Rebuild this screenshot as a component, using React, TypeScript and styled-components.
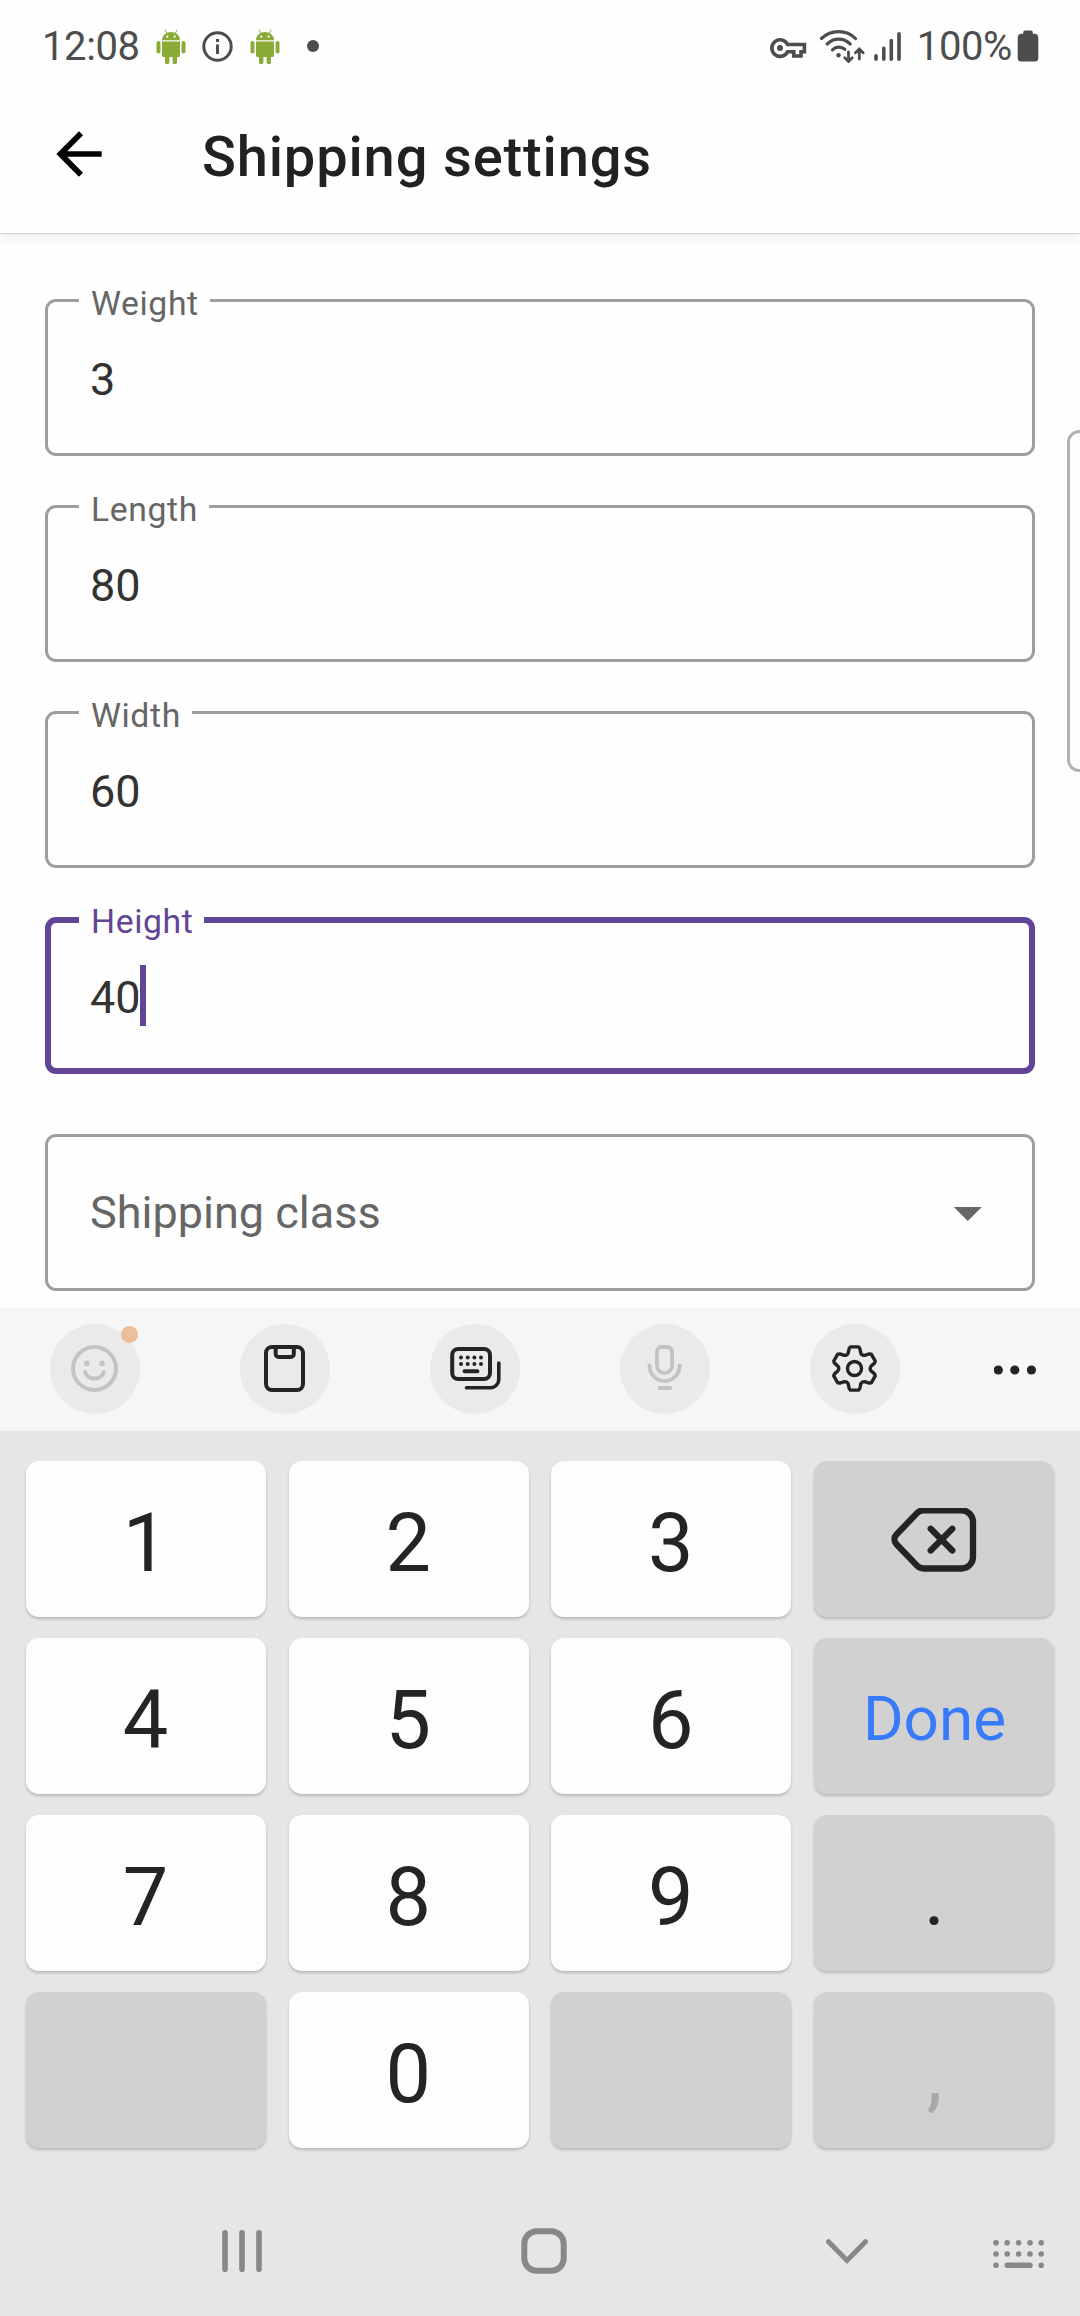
import React from "react";
import styled, { createGlobalStyle } from "styled-components";

const GlobalStyle = createGlobalStyle`
  *, *::before, *::after { box-sizing: border-box; }
  html, body { margin: 0; padding: 0; background: #fefefe; }
  body { font-family: Roboto, "Noto Sans", sans-serif; }
  svg { display: block; flex: none; }
`;

const ink = "#242424";
const statusInk = "#4d4d4d";
const accent = "#624594";

const Screen = styled.div`
  position: relative;
  display: flex;
  flex-direction: column;
  width: 1080px;
  height: 2316px;
  overflow: hidden;
  background: #fefefe;
`;

const StatusBar = styled.div`
  display: flex;
  justify-content: space-between;
  height: 92px;
  padding: 0 41px 0 42px;
  color: ${statusInk};
`;

const StatusGroup = styled.div`
  display: flex;
  align-items: center;
`;

const StatusText = styled.span<{ $gap: number }>`
  font-size: 40px;
  line-height: 92px;
  letter-spacing: -0.4px;
  padding-top: 1px;
  margin-right: ${(p) => p.$gap}px;
`;

const Header = styled.header`
  position: relative;
  z-index: 1;
  display: flex;
  align-items: center;
  height: 141px;
  padding: 0 45px;
  background: #fefefe;
  box-shadow: 0 1px 1px rgba(0, 0, 0, 0.12), 0 4px 14px rgba(0, 0, 0, 0.07);
  clip-path: inset(0 0 -30px 0);
`;

const BackButton = styled.button`
  display: flex;
  width: 68px;
  height: 68px;
  margin: 0 89px 17px 0;
  padding: 0;
  border: 0;
  background: none;
`;

const Title = styled.h1`
  margin: 0 0 11px;
  font-size: 56px;
  line-height: 66px;
  font-weight: 500;
  letter-spacing: 0.85px;
  color: #212121;
`;

const Form = styled.main`
  display: flex;
  flex-direction: column;
  height: 1075px;
  padding: 66px 45px 0;
  gap: 49px;
`;

const Field = styled.fieldset<{ $focused?: boolean }>`
  display: block;
  height: 157px;
  margin: 0;
  min-width: 0;
  padding: 0 ${(p) => (p.$focused ? 28 : 31)}px;
  border: ${(p) => (p.$focused ? 6 : 3)}px solid ${(p) => (p.$focused ? accent : "#9e9e9e")};
  border-radius: 11px;
  color: ${(p) => (p.$focused ? accent : "#666666")};
`;

const Legend = styled.legend<{ $focused?: boolean }>`
  height: ${(p) => (p.$focused ? 6 : 3)}px;
  padding: 0 11px 0 12px;
  font-size: 33.75px;
  line-height: 9px;
  letter-spacing: 0.6px;
`;

const ValueRow = styled.div<{ $focused?: boolean }>`
  display: flex;
  align-items: center;
  height: ${(p) => (p.$focused ? 145 : 151)}px;
  padding: 4px 11px 0;
`;

const Value = styled.span`
  font-size: 45px;
  line-height: 60px;
  color: #323232;
`;

const Caret = styled.span`
  width: 6px;
  height: 61px;
  margin: 0 0 4px -1px;
  background: ${accent};
`;

const Select = styled.div`
  display: flex;
  align-items: center;
  justify-content: space-between;
  height: 157px;
  margin-top: 11px;
  padding: 0 50px 0 42px;
  border: 3px solid #9e9e9e;
  border-radius: 11px;
  font-size: 45px;
  color: #666666;
`;

const EdgeHandle = styled.div`
  position: absolute;
  top: 430px;
  right: -12px;
  width: 25px;
  height: 342px;
  border: 3px solid #b2b2b2;
  border-radius: 12px;
  background: #fefefe;
`;

const Toolbar = styled.div`
  display: flex;
  align-items: center;
  height: 123px;
  padding: 0 44px 2px 50px;
  gap: 100px;
  background: #f6f6f6;
`;

const Tool = styled.button`
  position: relative;
  display: flex;
  align-items: center;
  justify-content: center;
  width: 90px;
  height: 90px;
  padding: 0;
  border: 0;
  border-radius: 50%;
  background: #eaeaea;
`;

const Badge = styled.span`
  position: absolute;
  top: 2px;
  right: 2px;
  width: 17px;
  height: 17px;
  border-radius: 50%;
  background: rgba(236, 179, 137, 0.85);
`;

const MoreButton = styled.button`
  display: flex;
  margin: 2px 0 0 -6px;
  padding: 0;
  border: 0;
  background: none;
`;

const Keypad = styled.div`
  display: grid;
  grid-template-columns: repeat(4, 240px);
  grid-auto-rows: 156px;
  justify-content: space-between;
  row-gap: 21px;
  height: 749px;
  padding: 30px 26px 0;
  background: #e6e6e6;
`;

type KeyTone = "number" | "action";

const Key = styled.button<{ $tone: KeyTone; $color?: string; $size?: number }>`
  display: flex;
  align-items: center;
  justify-content: center;
  padding: ${(p) => (p.$size ? "6px 0 0 1px" : p.$tone === "number" ? "8px 1px 0 0" : "8px 0 0 1px")};
  border: 0;
  border-radius: 13px;
  background: ${(p) => (p.$tone === "number" ? "#fdfdfd" : "#d1d1d1")};
  box-shadow: 0 2px 3px rgba(0, 0, 0, 0.2);
  font-family: inherit;
  font-size: ${(p) => p.$size ?? 81}px;
  line-height: 1;
  color: ${(p) => p.$color ?? ink};
`;

const NavBar = styled.nav`
  display: flex;
  align-items: center;
  flex: 1;
  padding: 6px 36px 0 222px;
  background: #e6e6e6;
`;

const NavButton = styled.button<{ $after: number; $drop?: number }>`
  display: flex;
  margin: 0 ${(p) => p.$after}px 0 0;
  padding: ${(p) => p.$drop ?? 0}px 0 0;
  border: 0;
  background: none;
`;

const IconSlot = styled.span<{ $before?: number; $shift?: number }>`
  display: flex;
  margin-left: ${(p) => p.$before ?? 0}px;
  padding-top: ${(p) => p.$shift ?? 0}px;
`;

const AndroidIcon = () => (
  <svg width="30" height="35" viewBox="0 0 30 35" fill="#8aab38">
    <path d="M6 11.2C6 6.8 9.6 3 15 3s9 3.800 9 8.200Z" />
    <path d="M10.800 4.200 8.900 1M19.200 4.200 21.100 1" stroke="#8aab38" strokeWidth="1" strokeLinecap="round" />
    <path d="M6 12.500h18v14a1.600 1.600 0 0 1-1.600 1.600H21v5a2.200 2.200 0 0 1-4.400 0v-5h-3.200v5a2.200 2.200 0 0 1-4.400 0v-5H7.600A1.600 1.600 0 0 1 6 26.500Z" />
    <rect x="0.500" y="12" width="4" height="12.500" rx="2" />
    <rect x="25.500" y="12" width="4" height="12.500" rx="2" />
    <circle cx="11.300" cy="7.700" r="1.100" fill="#fefefe" />
    <circle cx="18.700" cy="7.700" r="1.100" fill="#fefefe" />
  </svg>
);

const InfoIcon = () => (
  <svg width="31" height="31" viewBox="0 0 31 31" fill="none" stroke={statusInk} strokeWidth="3">
    <circle cx="15.500" cy="15.500" r="13.700" />
    <path d="M15.500 13.600v9.400M15.500 8v3" />
  </svg>
);

const VpnKeyIcon = () => (
  <svg width="37" height="22" viewBox="0 0 37 22" fill="none" stroke={statusInk} strokeWidth="3.600">
    <path d="M17.600 7.500A8.300 8.300 0 1 0 17.600 14.700H23.800V19H31V14.700H34.400V7.500Z" />
    <circle cx="10" cy="11" r="3" fill={statusInk} stroke="none" />
  </svg>
);

const WifiIcon = () => (
  <svg width="46" height="34" viewBox="819 29 46 34" fill="none" stroke={statusInk} strokeWidth="3.200" strokeLinecap="round">
    <path d="M821.500 38.500C831 29.300 846.500 29.300 855.500 38.500M827.200 44C834 37.500 843.500 37.500 850.200 44M832.500 49.800C836 46.300 841.500 46.300 844.800 49.300" />
    <circle cx="838.500" cy="55.300" r="2.200" fill={statusInk} stroke="none" />
    <path strokeWidth="2.800" d="M848.500 52v9M844.800 57.800l3.700 3.700 3.700-3.700M859.300 59v-9.500M855.500 52.700l3.800-3.700 3.800 3.700" />
  </svg>
);

const SignalIcon = () => (
  <svg width="28" height="31" viewBox="874 31 28 31" stroke={statusInk} strokeWidth="3.600" strokeLinecap="round">
    <path d="M876 55.800v3.400M883.800 48.300v10.900M891.300 40.500v18.700M899 33.800v25.400" />
  </svg>
);

const BatteryIcon = () => (
  <svg width="22" height="32" viewBox="0 0 22 32" fill={statusInk}>
    <path d="M6.300 3.300V2A1.600 1.600 0 0 1 7.900.4h6.200A1.600 1.600 0 0 1 15.700 2v1.800h1.800A3.800 3.800 0 0 1 21.300 7.600v20.400a3.600 3.600 0 0 1-3.600 3.600H4.300A3.600 3.600 0 0 1 .7 28V7.600A3.800 3.800 0 0 1 4.500 3.800h1.800Z" />
  </svg>
);

const DotIcon = () => (
  <svg width="12" height="12" viewBox="0 0 12 12">
    <circle cx="6" cy="6" r="6" fill={statusInk} />
  </svg>
);

const BackIcon = () => (
  <svg width="68" height="68" viewBox="0 0 24 24" fill="#000">
    <path d="M20 11H7.830l5.590-5.590L12 4l-8 8 8 8 1.410-1.410L7.830 13H20v-2z" />
  </svg>
);

const DropIcon = () => (
  <svg width="29" height="16" viewBox="0 0 29 16" fill="#666">
    <path d="M0.800 2h28L14.800 16Z" />
  </svg>
);

const SmileIcon = () => (
  <svg width="90" height="90" viewBox="50 1324 90 90" fill="none" stroke="#c3c3c3" strokeWidth="4" strokeLinecap="round">
    <circle cx="94.500" cy="1368.500" r="21.500" />
    <path d="M85.300 1372.300C87.500 1380.600 101.500 1380.600 103.700 1372.300" />
    <g fill="#c3c3c3" stroke="none">
      <circle cx="86.900" cy="1363.400" r="2.800" />
      <circle cx="102" cy="1363.400" r="2.800" />
    </g>
  </svg>
);

const ClipboardIcon = () => (
  <svg width="90" height="90" viewBox="240 1324 90 90" fill="none" stroke={ink} strokeWidth="4">
    <rect x="266" y="1347" width="37" height="43" rx="6" />
    <path d="M275.700 1347.500v6.500a3 3 0 0 0 3 3h12.100a3 3 0 0 0 3-3v-6.500" />
  </svg>
);

const keyDotColumns = [461, 467.700, 474.400, 481];

const KeyboardsIcon = () => (
  <svg width="90" height="90" viewBox="430 1324 90 90" fill="none" stroke={ink} strokeWidth="4" strokeLinecap="round">
    <rect x="452.200" y="1349" width="37.800" height="30" rx="6" />
    <path d="M464.600 1371.300h12.800" />
    <path strokeWidth="3.600" d="M498.800 1363v16.500a8.200 8.200 0 0 1-8.200 8.200H466.500" />
    <g fill={ink} stroke="none">
      {keyDotColumns.map((x) => (
        <React.Fragment key={x}>
          <circle cx={x} cy="1357.500" r="2" />
          <circle cx={x} cy="1364" r="2" />
        </React.Fragment>
      ))}
    </g>
  </svg>
);

const MicIcon = () => (
  <svg width="90" height="90" viewBox="620 1324 90 90" fill="none" stroke="#c3c3c3" strokeWidth="3.800" strokeLinecap="round">
    <path d="M656.900 1352a5 5 0 0 1 5-5h5.200a5 5 0 0 1 5 5v13.500a7.600 7.600 0 0 1-15.200 0Z" />
    <path d="M649.500 1365.500a15.100 15.600 0 0 0 30.200 0M659.700 1388h10.500" />
  </svg>
);

// One sixth of the gear outline, rotated around the hub to build the full shape.
const gearOutline = (() => {
  const tooth: [number, number][] = [[-19, -46], [-16, -60], [-12, -65], [12, -65], [16, -60], [19, -46], [22.5, -39], [30.4, -39.4]];
  const parts: string[] = [];
  for (let i = 0; i < 6; i++) {
    const a = (i * Math.PI) / 3;
    const p = tooth.map(([x, y]) => {
      const rx = (x * Math.cos(a) - y * Math.sin(a)) / 3;
      const ry = (x * Math.sin(a) + y * Math.cos(a)) / 3;
      return `${rx.toFixed(2)} ${ry.toFixed(2)}`;
    });
    parts.push(`${i ? "L" : "M"}${p[0]}L${p[1]}L${p[2]}L${p[3]}L${p[4]}L${p[5]}Q${p[6]} ${p[7]}`);
  }
  return parts.join("") + "Z";
})();

const GearIcon = () => (
  <svg width="90" height="90" viewBox="-44.500 -44.500 90 90" fill="none" stroke={ink} strokeWidth="3.400" strokeLinejoin="round">
    <path d={gearOutline} />
    <circle r="7" />
  </svg>
);

const MoreIcon = () => (
  <svg width="44" height="12" viewBox="0 0 44 12" fill={ink}>
    <circle cx="4.300" cy="6" r="4.600" />
    <circle cx="20.800" cy="6" r="4.600" />
    <circle cx="37.400" cy="6" r="4.600" />
  </svg>
);

const BackspaceIcon = () => (
  <svg width="90" height="70" viewBox="889.500 1508 90 70" fill="none" stroke={ink} strokeWidth="6.300" strokeLinecap="round">
    <path d="M924 1510.300H962A11.500 11.500 0 0 1 973.500 1521.800V1557A11.500 11.500 0 0 1 962 1568.500H924A9 9 0 0 1 917.500 1565.700L897 1544.300A7 7 0 0 1 897 1534.500L917.500 1513.100A9 9 0 0 1 924 1510.300Z" />
    <path d="M931.200 1528.800 952.800 1550.400M952.800 1528.800 931.200 1550.400" />
  </svg>
);

const RecentsIcon = () => (
  <svg width="40" height="42" viewBox="0 0 40 42" stroke="#888" strokeWidth="5.600" strokeLinecap="round">
    <path d="M3 2.800v36.400M20 2.800v36.400M37 2.800v36.400" />
  </svg>
);

const HomeIcon = () => (
  <svg width="46" height="46" viewBox="0 0 46 46" fill="none" stroke="#888" strokeWidth="6">
    <rect x="3.300" y="3.300" width="39.400" height="39.400" rx="12.500" />
  </svg>
);

const ChevronIcon = () => (
  <svg width="44" height="28" viewBox="825 2238 44 28" fill="none" stroke="#888" strokeWidth="5" strokeLinecap="round">
    <path d="M828.500 2241.700 847 2260.500 865.500 2241.700" />
  </svg>
);

const switchColumns = [3, 14.200, 25.600, 37, 48.200];

const SwitchKeyboardIcon = () => (
  <svg width="52" height="30" viewBox="0 0 52 30" fill="#888">
    {switchColumns.map((x) => (
      <React.Fragment key={x}>
        <circle cx={x} cy="3.700" r="2.800" />
        <circle cx={x} cy="15" r="2.800" />
      </React.Fragment>
    ))}
    <circle cx="3" cy="26.300" r="2.800" />
    <rect x="11.500" y="23.500" width="28.200" height="5.600" rx="2.800" />
    <circle cx="48.200" cy="26.300" r="2.800" />
  </svg>
);

type FieldData = { label: string; value: string; focused?: boolean };

const fields: FieldData[] = [
  { label: "Weight", value: "3" },
  { label: "Length", value: "80" },
  { label: "Width", value: "60" },
  { label: "Height", value: "40", focused: true },
];

type KeyData = { id: string; label?: React.ReactNode; tone: KeyTone; color?: string; size?: number };

const num = (n: string): KeyData => ({ id: n, label: n, tone: "number" });

const keys: KeyData[] = [
  num("1"), num("2"), num("3"),
  { id: "backspace", label: <BackspaceIcon />, tone: "action" },
  num("4"), num("5"), num("6"),
  { id: "done", label: "Done", tone: "action", color: "#387bfa", size: 62 },
  num("7"), num("8"), num("9"),
  { id: "period", label: ".", tone: "action" },
  { id: "blank-left", tone: "action" },
  num("0"),
  { id: "blank-right", tone: "action" },
  { id: "comma", label: ",", tone: "action", color: "#a8a8a8" },
];

export default function App() {
  return (
    <>
      <GlobalStyle />
      <Screen>
        <StatusBar>
          <StatusGroup>
            <StatusText $gap={16}>12:08</StatusText>
            <AndroidIcon />
            <IconSlot $before={16}><InfoIcon /></IconSlot>
            <IconSlot $before={17}><AndroidIcon /></IconSlot>
            <IconSlot $before={27}><DotIcon /></IconSlot>
          </StatusGroup>
          <StatusGroup>
            <IconSlot $shift={3}><VpnKeyIcon /></IconSlot>
            <IconSlot $before={12}><WifiIcon /></IconSlot>
            <IconSlot $before={9} $shift={1}><SignalIcon /></IconSlot>
            <IconSlot $before={15} />
            <StatusText $gap={5}>100%</StatusText>
            <BatteryIcon />
          </StatusGroup>
        </StatusBar>
        <Header>
          <BackButton aria-label="Back"><BackIcon /></BackButton>
          <Title>Shipping settings</Title>
        </Header>
        <Form>
          {fields.map((f) => (
            <Field key={f.label} $focused={f.focused}>
              <Legend $focused={f.focused}>{f.label}</Legend>
              <ValueRow $focused={f.focused}>
                <Value>{f.value}</Value>
                {f.focused && <Caret />}
              </ValueRow>
            </Field>
          ))}
          <Select>
            <span>Shipping class</span>
            <DropIcon />
          </Select>
        </Form>
        <EdgeHandle />
        <Toolbar>
          <Tool aria-label="Emoji"><SmileIcon /><Badge /></Tool>
          <Tool aria-label="Clipboard"><ClipboardIcon /></Tool>
          <Tool aria-label="Keyboard modes"><KeyboardsIcon /></Tool>
          <Tool aria-label="Voice input"><MicIcon /></Tool>
          <Tool aria-label="Settings"><GearIcon /></Tool>
          <MoreButton aria-label="More"><MoreIcon /></MoreButton>
        </Toolbar>
        <Keypad>
          {keys.map((k) => (
            <Key key={k.id} $tone={k.tone} $color={k.color} $size={k.size}>{k.label}</Key>
          ))}
        </Keypad>
        <NavBar>
          <NavButton $after={259} aria-label="Recents"><RecentsIcon /></NavButton>
          <NavButton $after={258} aria-label="Home"><HomeIcon /></NavButton>
          <NavButton $after={124} $drop={1} aria-label="Hide keyboard"><ChevronIcon /></NavButton>
          <NavButton $after={0} $drop={5} aria-label="Switch keyboard"><SwitchKeyboardIcon /></NavButton>
        </NavBar>
      </Screen>
    </>
  );
}
